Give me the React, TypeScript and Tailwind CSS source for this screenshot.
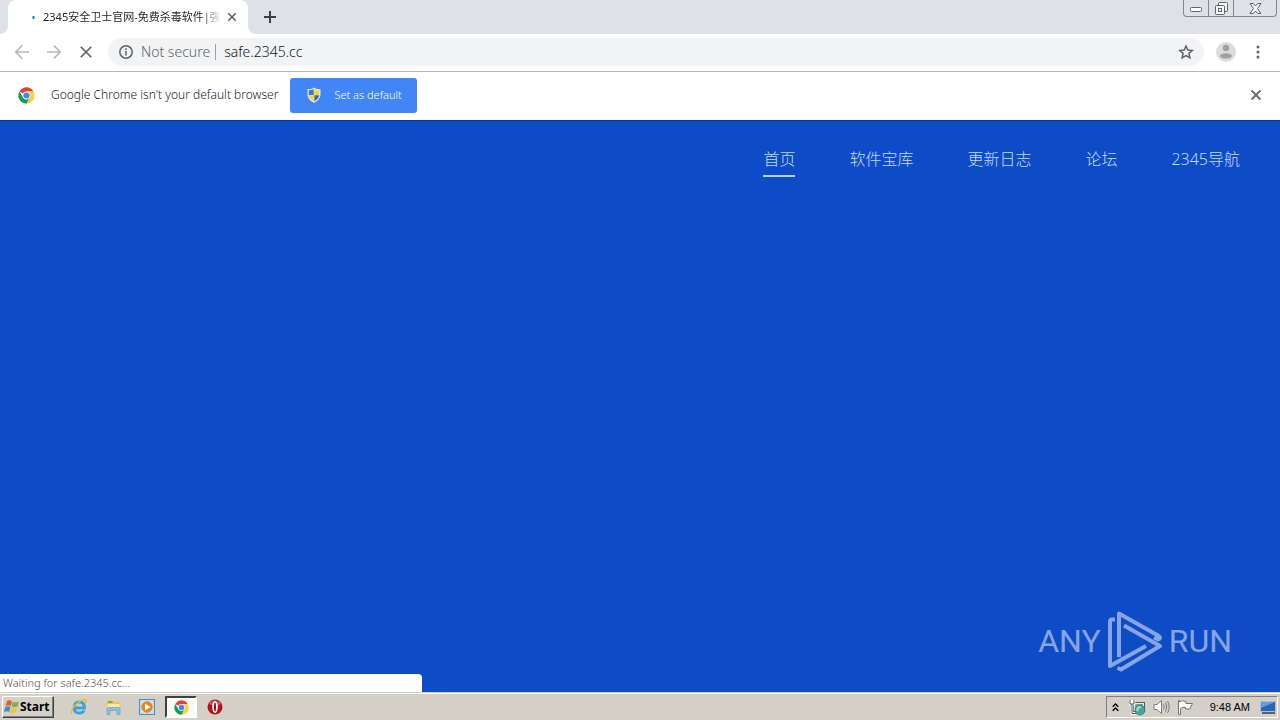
import { useState } from "react";
import type { ReactNode } from "react";

const navItems = ["首页", "软件宝库", "更新日志", "论坛", "2345导航"];

function ChromeLogo({ size }: { size: number }) {
  return (
    <svg width={size} height={size} viewBox="0 0 48 48" aria-hidden="true">
      <circle cx="24" cy="24" r="23" fill="#fff" />
      <path d="M24 24 4.1 12.5A23 23 0 0 1 43.9 12.5H24z" fill="#db4437" />
      <path d="M24 13H43.9A23 23 0 0 1 24 47L33.5 29.5z" fill="#ffcd40" />
      <path d="M4.1 12.5 14.5 29.5 24 35 33.5 29.5 24 47A23 23 0 0 1 4.1 12.5z" fill="#0f9d58" />
      <circle cx="24" cy="24" r="11" fill="#f1f1f1" />
      <circle cx="24" cy="24" r="8.6" fill="#4285f4" />
    </svg>
  );
}

function CloseIcon({ size, width = 2 }: { size: number; width?: number }) {
  return (
    <svg width={size} height={size} viewBox="0 0 12 12" fill="none" stroke="currentColor" strokeWidth={width} aria-hidden="true">
      <path d="M1.5 1.5 10.5 10.5M10.5 1.5 1.5 10.5" />
    </svg>
  );
}

function TabStrip() {
  return (
    <div className="flex h-[34px] items-start justify-between bg-[#dee1e6]">
      <div className="flex items-center">
        <div className="h-[34px] w-2 bg-white">
          <div className="h-full rounded-br-lg bg-[#dee1e6]" />
        </div>
        <div className="flex h-[34px] w-[240px] items-center rounded-t-lg bg-white pr-[9px] pl-[23px]">
          <svg className="mr-2 shrink-0" width="4" height="6" viewBox="0 0 4 6" aria-hidden="true">
            <path d="M2.5 2V5" stroke="#1a73e8" strokeWidth="2" />
          </svg>
          <span className="bg-gradient-to-r from-[#202124] from-90% to-transparent bg-clip-text text-[11px] leading-4 whitespace-nowrap text-transparent">
            2345安全卫士官网-免费杀毒软件|强
          </span>
          <button aria-label="Close tab" className="ml-auto p-[2px] text-[#5f6368]">
            <CloseIcon size={10} />
          </button>
        </div>
        <div className="h-[34px] w-2 bg-white">
          <div className="h-full rounded-bl-lg bg-[#dee1e6]" />
        </div>
        <button aria-label="New tab" className="ml-2 text-[#3c4043]">
          <svg width="12" height="12" viewBox="0 0 12 12" stroke="currentColor" strokeWidth="2" aria-hidden="true">
            <path d="M6 0V12M0 6H12" />
          </svg>
        </button>
      </div>
      <div className="mr-[3px] flex h-[17px] divide-x divide-[#80868d] rounded-b-[4px] border border-t-0 border-[#80868d] text-[#5f646b]">
        <button aria-label="Minimize" className="flex w-[25px] items-end justify-center pb-1">
          <svg width="12" height="5" viewBox="0 0 12 5" fill="#fff" stroke="currentColor" aria-hidden="true">
            <rect x=".5" y=".5" width="11" height="4" rx="1" />
          </svg>
        </button>
        <button aria-label="Restore" className="flex w-[25px] items-center justify-center">
          <svg width="13" height="13" viewBox="0 0 13 13" fill="#f4f5f7" stroke="currentColor" aria-hidden="true">
            <rect x="3.5" y=".5" width="9" height="9" rx="1" />
            <rect x=".5" y="3.5" width="9" height="9" rx="1" />
            <rect x="3.5" y="6.5" width="3" height="3" />
          </svg>
        </button>
        <button aria-label="Close window" className="flex w-[42px] items-center justify-center">
          <svg width="13" height="11" viewBox="0 0 13 11" fill="#f4f5f7" stroke="currentColor" aria-hidden="true">
            <path d="M1 .5H4.2L6.5 3 8.8 .5H12L8.5 5.5 12 10.5H8.8L6.5 8 4.2 10.5H1L4.5 5.5z" />
          </svg>
        </button>
      </div>
    </div>
  );
}

function Toolbar() {
  const [url, setUrl] = useState("safe.2345.cc");

  return (
    <div className="flex h-[38px] items-center border-b border-[#b3b6ba] bg-white pr-4 pb-[2px] pl-[14px]">
      <div className="flex items-center gap-4">
        <button aria-label="Back" className="text-[#b4b6b9]">
          <svg width="16" height="16" viewBox="0 0 16 16" fill="none" stroke="currentColor" strokeWidth="1.7" aria-hidden="true">
            <path d="M15 8H2M8.2 1.5 1.8 8 8.2 14.5" />
          </svg>
        </button>
        <button aria-label="Forward" className="text-[#b4b6b9]">
          <svg width="16" height="16" viewBox="0 0 16 16" fill="none" stroke="currentColor" strokeWidth="1.7" aria-hidden="true">
            <path d="M1 8H14M7.8 1.5 14.2 8 7.8 14.5" />
          </svg>
        </button>
        <button aria-label="Stop loading" className="px-[1px] text-[#5f6368]">
          <CloseIcon size={14} width={1.5} />
        </button>
      </div>
      <div className="ml-[14px] flex h-7 flex-1 items-center rounded-full bg-[#f1f3f4] pr-[10px] pl-[11px]">
        <svg width="14" height="14" viewBox="0 0 14 14" fill="none" stroke="#5f6368" strokeWidth="1.5" aria-hidden="true">
          <circle cx="7" cy="7" r="6.2" />
          <path d="M7 6V10.5M7 3.3V4.9" />
        </svg>
        <label htmlFor="url" className="ml-2 border-r border-[#9aa0a6] pr-[5px] text-[14px] leading-4 font-light text-[#5f6368]">
          Not secure
        </label>
        <input
          id="url"
          className="ml-2 min-w-0 flex-1 bg-transparent text-[14px] font-light text-[#202124] outline-none"
          value={url}
          onChange={(e) => setUrl(e.target.value)}
        />
        <button aria-label="Bookmark this page">
          <svg width="16" height="16" viewBox="0 0 16 16" fill="none" stroke="#5f6368" strokeWidth="1.5" aria-hidden="true">
            <path d="M8 2 9.8 6.1 14.3 6.5 10.9 9.4 11.9 13.8 8 11.5 4.1 13.8 5.1 9.4 1.7 6.5 6.2 6.1z" />
          </svg>
        </button>
      </div>
      <button aria-label="Profile" className="ml-3">
        <svg width="20" height="20" viewBox="0 0 20 20" aria-hidden="true">
          <circle cx="10" cy="10" r="10" fill="#dcdcdc" />
          <circle cx="10" cy="6" r="3.2" fill="#a1a1a1" />
          <ellipse cx="10" cy="14" rx="6" ry="2.8" fill="#a1a1a1" />
        </svg>
      </button>
      <button aria-label="Menu" className="ml-4">
        <svg width="12" height="14" viewBox="0 0 12 14" fill="#5f6368" aria-hidden="true">
          <circle cx="6" cy="2" r="1.5" />
          <circle cx="6" cy="7" r="1.5" />
          <circle cx="6" cy="12" r="1.5" />
        </svg>
      </button>
    </div>
  );
}

function DefaultBrowserBar({ onClose }: { onClose: () => void }) {
  return (
    <div className="flex h-[49px] items-center border-b border-[#0a368f] bg-white px-[18px] pb-[2px]">
      <ChromeLogo size={17} />
      <p className="ml-4 text-[12px] font-light text-[#202124]">Google Chrome isn't your default browser</p>
      <button className="ml-3 flex h-[35px] w-[127px] items-center rounded-[3px] bg-[#4285f4] pl-4 text-[11px] font-light text-white">
        <svg className="mr-3" width="16" height="16" viewBox="0 0 16 16" aria-hidden="true">
          <path d="M8 .5C6 2 4 2.3 1.5 2.3V7C1.5 11 4 14 8 15.7 12 14 14.5 11 14.5 7V2.3C12 2.3 10 2 8 .5z" fill="#e8e8dc" />
          <path d="M7.7 2C6 3 4.5 3.3 2.7 3.4V8H7.7z" fill="#3579c6" />
          <path d="M8.3 2C10 3 11.5 3.3 13.3 3.4V8H8.3z" fill="#fbd32d" />
          <path d="M2.8 8.3H7.7V14.3C4.5 12.5 3 10.5 2.8 8.3z" fill="#f9d22c" />
          <path d="M13.2 8.3H8.3V14.3C11.5 12.5 13 10.5 13.2 8.3z" fill="#2d6fbd" />
        </svg>
        Set as default
      </button>
      <button aria-label="Dismiss" onClick={onClose} className="ml-auto text-[#6b6e72]">
        <CloseIcon size={12} />
      </button>
    </div>
  );
}

function Watermark() {
  return (
    <div className="absolute right-12 bottom-5 flex items-center gap-[6px] font-['Roboto',sans-serif] text-[32px] leading-none text-white/50">
      <span>ANY</span>
      <svg width="56" height="62" viewBox="0 0 56 62" fill="none" stroke="currentColor" strokeWidth="4" strokeLinejoin="round" aria-hidden="true">
        <path d="M12 47V3.500L51 25.500Q55 28 51 29.500L47 27.500M8 9.500H5Q3 9.500 3 12V56L39 36M17 15.500 53 36 14 59.500 10.500 58" />
      </svg>
      <span>RUN</span>
    </div>
  );
}

function TaskButton({ label, active, children }: { label: string; active?: boolean; children: ReactNode }) {
  return (
    <button
      aria-label={label}
      className={
        active
          ? "flex h-[22px] w-8 items-center justify-center border-2 border-t-[#404040] border-r-white border-b-white border-l-[#404040] bg-[#fafaf9]"
          : "flex h-[22px] w-8 items-center justify-center"
      }
    >
      {children}
    </button>
  );
}

function Taskbar() {
  return (
    <footer className="flex h-7 items-center border-t border-[#d4d0c8] bg-[#d4d0c8] px-[2px] shadow-[inset_0_1px_0_#fff]">
      <button className="mt-[1px] flex h-[22px] w-[52px] items-center border border-t-white border-r-[#404040] border-b-[#404040] border-l-white pl-[1px] text-[12px] font-bold text-black shadow-[inset_-1px_-1px_0_#808080]">
        <svg width="16" height="16" viewBox="0 0 16 16" aria-hidden="true">
          <path d="M3 2Q5.5 .5 8 2.3L6.8 7Q4 5.5 1.5 7z" fill="#ea5a28" />
          <path d="M8.8 2.6Q11.5 4.3 15 2.6L13.5 7.4Q10 9 7.6 7.3z" fill="#73b743" />
          <path d="M1.3 8Q4 6.5 6.5 8L5.2 13Q3 11.5 0 13z" fill="#3d8bd5" />
          <path d="M7.3 8.3Q10 10 13.2 8.4L11.8 13.3Q8.5 15 6 13.3z" fill="#f7c42e" />
        </svg>
        Start
      </button>
      <div className="mt-[1px] ml-[9px] flex items-center gap-[2px]">
        <TaskButton label="Internet Explorer">
          <svg width="18" height="18" viewBox="0 0 18 18" fill="none" aria-hidden="true">
            <path d="M4.5 10H14.5Q14.5 4 9.5 4 4.2 4 4.2 9.7 4.2 15 9.5 15 13 15 14 12.5" stroke="#3ba0e0" strokeWidth="2.8" />
            <path d="M2 16Q-.5 13 6 6.5 13 0 16 2 17 3 15 6" stroke="#ecb936" strokeWidth="1.4" />
          </svg>
        </TaskButton>
        <TaskButton label="Explorer">
          <svg width="17" height="17" viewBox="0 0 17 17" aria-hidden="true">
            <path d="M1.5 3.5 3 1.5H8L9 3H15.5V11H1.5z" fill="#eac566" />
            <path d="M2.5 5H14.5V11H2.5z" fill="#fbe9a6" />
            <path d="M3 3H7.5" stroke="#4fa84d" strokeWidth="1.5" />
            <path d="M2 15.5V10Q2 8.5 4 8.5H13Q15 8.5 15 10V15.5H12V11.5H5V15.5z" fill="#85c5ec" stroke="#5597c4" strokeWidth=".6" />
          </svg>
        </TaskButton>
        <TaskButton label="Media Player">
          <svg width="16" height="16" viewBox="0 0 16 16" aria-hidden="true">
            <rect x=".5" y=".5" width="15" height="15" fill="#b8daf2" stroke="#4d91c4" />
            <rect x="2.5" y="2.5" width="11" height="11" fill="#d8ecf8" />
            <circle cx="8" cy="8" r="5.7" fill="#ee8117" />
            <path d="M6 4.5V11.5L11.5 8z" fill="#fff" />
          </svg>
        </TaskButton>
        <TaskButton label="Chrome" active>
          <ChromeLogo size={15} />
        </TaskButton>
        <TaskButton label="Opera">
          <svg width="16" height="16" viewBox="0 0 16 16" aria-hidden="true">
            <circle cx="8" cy="8" r="7.5" fill="#b31218" />
            <path d="M2 5A7 7 0 0 1 14 5Q8 8 2 5z" fill="#d9575b" />
            <ellipse cx="8" cy="8" rx="2.8" ry="6" fill="#fff" />
            <ellipse cx="8" cy="8" rx="1" ry="4.5" fill="#8b1015" />
          </svg>
        </TaskButton>
      </div>
      <div className="mt-[1px] ml-auto flex h-[22px] items-center border border-t-[#808080] border-r-white border-b-white border-l-[#808080] pl-[5px]">
        <svg width="7" height="9" viewBox="0 0 7 9" fill="none" stroke="#000" strokeWidth="1.4" aria-hidden="true">
          <path d="M.7 3.7 3.5 1 6.3 3.7M.7 7.7 3.5 5 6.3 7.7" />
        </svg>
        <svg className="ml-[10px]" width="17" height="17" viewBox="0 0 17 17" aria-hidden="true">
          <rect x="4.5" y="3.5" width="11" height="9" fill="#e9eeec" stroke="#565c5b" />
          <rect x="6" y="5" width="8" height="6" fill="#7ca7a0" />
          <path d="M1 1V5H5V1M3 1V14.5H7" fill="none" stroke="#fff" strokeWidth="2.5" />
          <path d="M1 1V5H5V1M3 5V14.5H7" fill="none" stroke="#555" />
          <circle cx="11" cy="11" r="5" fill="#43a6a0" stroke="#276d77" strokeWidth=".7" />
          <path d="M8 8Q11 6 13 8L10 10 9 13 7 11z" fill="#a3ddad" />
        </svg>
        <svg className="ml-[7px]" width="17" height="16" viewBox="0 0 17 16" fill="#fff" stroke="#7b7b7b" aria-hidden="true">
          <path d="M1 5.5H4L8.5 1.5V14.5L4 10.5H1z" />
          <path d="M10.5 5.5Q12 8 10.5 10.5M12.5 3.5Q15 8 12.5 12.5M14.5 2Q18 8 14.5 14" fill="none" />
        </svg>
        <svg className="ml-[7px]" width="17" height="16" viewBox="0 0 17 16" fill="#fff" stroke="#727272" aria-hidden="true">
          <path d="M2.5 3Q5 .5 9 2.5V4.5H15.5L12.5 10H8.5V8.5Q6 7.5 3.5 9.5V15.5H1.5V1.5H2.5z" />
        </svg>
        <time className="ml-4 font-['Liberation_Sans',sans-serif] text-[11px] text-black">9:48 AM</time>
        <svg className="mr-[1px] ml-[10px]" width="16" height="14" viewBox="0 0 16 14" aria-hidden="true">
          <rect x=".5" y="1.5" width="15" height="10" fill="#2966b9" stroke="#aebdce" />
          <path d="M1 2H15Q8 5 1 8z" fill="#5f9ddd" />
          <path d="M2 13H15" stroke="#303b49" strokeWidth="1.5" />
        </svg>
      </div>
    </footer>
  );
}

export default function App() {
  const [showBar, setShowBar] = useState(true);

  return (
    <div className="flex min-h-screen flex-col bg-[#0e4bc6] font-['Noto_Sans','Noto_Sans_CJK_SC',sans-serif]">
      <header>
        <TabStrip />
        <Toolbar />
        {showBar && <DefaultBrowserBar onClose={() => setShowBar(false)} />}
      </header>
      <main className="relative flex-1">
        <nav className="flex justify-end gap-[54px] px-10 pt-[26px] text-[16px] leading-6 font-light text-[#c4dcff]">
          {navItems.map((item, i) => (
            <a key={item} href="#" className={i === 0 ? "border-b-2 border-[#b5d4ff] pb-1" : "pb-1"}>
              {item}
            </a>
          ))}
        </nav>
        <Watermark />
        <div className="absolute bottom-0 left-0 h-[18px] w-[33%] rounded-tr-[4px] bg-white px-[3px] text-[11px] leading-[18px] font-light text-[#4b4e52]">
          Waiting for safe.2345.cc...
        </div>
      </main>
      <Taskbar />
    </div>
  );
}
